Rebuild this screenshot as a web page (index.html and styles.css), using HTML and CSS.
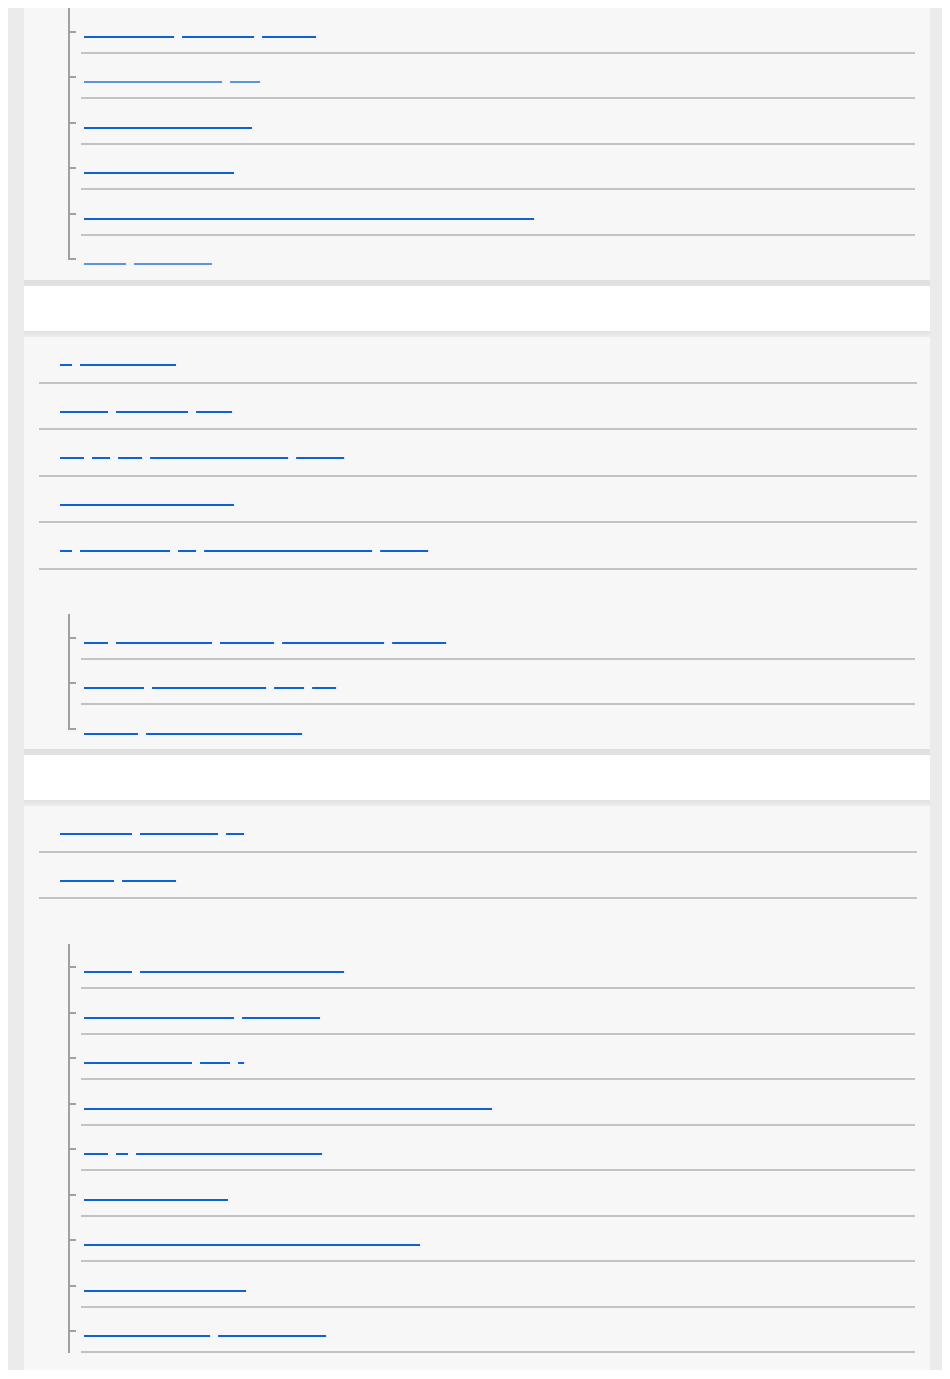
FILE: index.html
```html
<!DOCTYPE html>
<html lang="en">
<head>
<meta charset="utf-8">
<title>Help Guide – Contents</title>
<link rel="stylesheet" href="styles.css">
</head>
<body>
<div class="page">

  <section class="panel">
    <ul class="tree top">
      <li class="node"><div class="row"><a class="link" href="#"><span class="w">Troubleshooting</span> <span class="w">Compensation</span> <span class="w">Recording</span></a></div></li>
      <li class="node"><div class="row"><a class="link seen" href="#"><span class="w">NetworkFunctionSettings</span> <span class="w">Movie</span></a></div></li>
      <li class="node"><div class="row"><a class="link" href="#"><span class="w">ShootingModeSelectionOptions</span></a></div></li>
      <li class="node"><div class="row"><a class="link" href="#"><span class="w">DisplayPanelConfiguration</span></a></div></li>
      <li class="node"><div class="row"><a class="link" href="#"><span class="w">ConnectingThisProductToSmartphoneUsingTheDedicatedApplicationViaBluetoothLE</span></a></div></li>
      <li class="node last"><div class="row"><a class="link seen" href="#"><span class="w">Editing</span> <span class="w">Customization</span></a></div></li>
    </ul>
  </section>

  <div class="band"><h2 class="band-title">Shooting</h2></div>

  <section class="panel mid">
    <ul class="toc">
      <li class="item"><a class="link" href="#"><span class="w">On</span> <span class="w">ShootingSettings</span></a></li>
      <li class="item"><a class="link" href="#"><span class="w">Playback</span> <span class="w">Compensation</span> <span class="w">Camera</span></a></li>
      <li class="item"><a class="link" href="#"><span class="w">Menu</span> <span class="w">The</span> <span class="w">Page</span> <span class="w">NetworkFunctionSettings</span> <span class="w">Shooting</span></a></li>
      <li class="item"><a class="link" href="#"><span class="w">AutoFocusAndManualFocusSetups</span></a></li>
      <li class="item"><a class="link" href="#"><span class="w">In</span> <span class="w">Troubleshooting</span> <span class="w">For</span> <span class="w">ShootingModeSelectionOptions</span> <span class="w">Settings</span></a></li>
    </ul>
    <ul class="tree">
      <li class="node"><div class="row"><a class="link" href="#"><span class="w">Help</span> <span class="w">ShootingSettings</span> <span class="w">Recording</span> <span class="w">ColorTemperatures</span> <span class="w">Bluetooth</span></a></div></li>
      <li class="node"><div class="row"><a class="link" href="#"><span class="w">Connection</span> <span class="w">ExposureAndMetering</span> <span class="w">Movie</span> <span class="w">Menu</span></a></div></li>
      <li class="node last"><div class="row"><a class="link" href="#"><span class="w">Recording</span> <span class="w">ImageStabilizationFunction</span></a></div></li>
    </ul>
  </section>

  <div class="band"><h2 class="band-title">Playback</h2></div>

  <section class="panel end">
    <ul class="toc">
      <li class="item"><a class="link" href="#"><span class="w">Compensation</span> <span class="w">Customization</span> <span class="w">Set</span></a></li>
      <li class="item"><a class="link" href="#"><span class="w">Recording</span> <span class="w">Bluetooth</span></a></li>
    </ul>
    <ul class="tree">
      <li class="node"><div class="row"><a class="link" href="#"><span class="w">Shooting</span> <span class="w">ConnectingThisProductToSmartphones</span></a></div></li>
      <li class="node"><div class="row"><a class="link" href="#"><span class="w">DisplayPanelConfiguration</span> <span class="w">Customization</span></a></div></li>
      <li class="node"><div class="row"><a class="link" href="#"><span class="w">ImageStabilization</span> <span class="w">Movie</span> <span class="w">A</span></a></div></li>
      <li class="node"><div class="row"><a class="link" href="#"><span class="w">UsingTheDedicatedApplicationViaBluetoothLEToTransferImagesPlusMovies</span></a></div></li>
      <li class="node"><div class="row"><a class="link" href="#"><span class="w">Menu</span> <span class="w">On</span> <span class="w">ShootingModeSelectionOptionsFor</span></a></div></li>
      <li class="node"><div class="row"><a class="link" href="#"><span class="w">ShootingSettingsPlayback</span></a></div></li>
      <li class="node"><div class="row"><a class="link" href="#"><span class="w">ImageQualityAndRecordingFormatShootingSettingsConnection</span></a></div></li>
      <li class="node"><div class="row"><a class="link" href="#"><span class="w">OnDisplayPanelConfiguration</span></a></div></li>
      <li class="node"><div class="row"><a class="link" href="#"><span class="w">TroubleshootingCamera</span> <span class="w">ImageStabilization</span></a></div></li>
    </ul>
  </section>

</div>
</body>
</html>
```

FILE: styles.css
```css
* {
  box-sizing: border-box;
}

html {
  margin: 0;
  padding: 0;
}

body {
  margin: 8px;
  background: #ffffff;
  font-family: "Liberation Mono", "DejaVu Sans Mono", monospace;
  font-size: 10px;
}

.page {
  background: #ebebeb;
  padding: 0 12px 0 16px;
}

.panel {
  background: #f7f7f7;
  padding-bottom: 1px;
}

.panel.mid {
  padding-bottom: 0.5px;
}

.panel.end {
  padding-bottom: 17px;
}

.band {
  height: 57px;
  background: linear-gradient(to bottom,
    #dfdfdf 0, #e1e1e1 6px,
    #ffffff 6px, #ffffff 51px,
    #e1e1e1 51px, #ededed 57px);
  display: flex;
  align-items: center;
  padding-left: 36px;
}

.band-title {
  margin: 0;
  font-size: 10px;
  font-weight: normal;
  line-height: 20px;
  color: transparent;
}

/* top-level entries */
.toc {
  list-style: none;
  margin: 0 13px 0 15px;
  padding: 0;
}

.item {
  padding: 12px 0 12.5px 21px;
  line-height: 20px;
  border-bottom: 2px solid #c3c3c3;
}

/* nested tree */
.tree {
  list-style: none;
  margin: 44.5px 15px 0 44px;
  padding: 0;
}

.tree.top {
  margin-top: 0;
}

.node {
  position: relative;
  padding-left: 13px;
}

.node::before {
  content: "";
  position: absolute;
  left: 0;
  top: 0;
  bottom: 0;
  width: 2px;
  background: #a0a0a0;
}

.node::after {
  content: "";
  position: absolute;
  left: 0;
  top: 22.5px;
  width: 8px;
  height: 2px;
  background: #a0a0a0;
}

.node.last::before {
  bottom: auto;
  height: 24.5px;
}

.row {
  padding: 12.5px 0 11px 3px;
  line-height: 20px;
  border-bottom: 2px solid #c3c3c3;
}

.node.last .row {
  border-bottom: none;
}

/* links: the label glyphs are not painted, only their underlines */
.link {
  color: transparent;
  text-decoration: none;
  word-spacing: 2px;
  white-space: nowrap;
}

.w {
  text-decoration-line: underline;
  text-decoration-color: #0f62d6;
  text-decoration-thickness: 2px;
  text-underline-offset: 3px;
  text-decoration-skip-ink: none;
}

.link.seen .w {
  text-decoration-color: #5a94dd;
}
```
